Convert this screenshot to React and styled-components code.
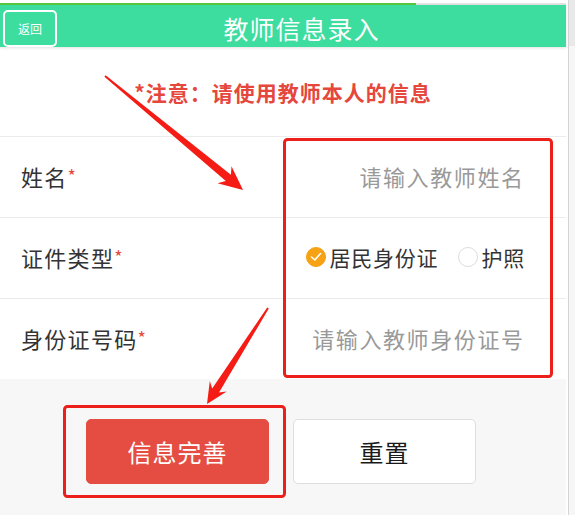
import React from "react";
import styled, { createGlobalStyle } from "styled-components";

const GlobalStyle = createGlobalStyle`
  html, body {
    margin: 0;
    padding: 0;
    background: #fff;
    overflow: hidden;
  }
  body {
    font-family: "Noto Sans CJK SC", "Noto Sans", sans-serif;
  }
`;

const Screen = styled.div`
  position: relative;
  display: flex;
  width: 575px;
  height: 515px;
  overflow: hidden;
`;

const Page = styled.div`
  width: 566px;
  flex-shrink: 0;
  display: flex;
  flex-direction: column;
  background: #fff;
`;

const LoadBar = styled.div`
  height: 2px;
  margin-top: 3px;
  background: linear-gradient(to right, #58c83f 0 416px, #e4e4e4 416px);
`;

const Header = styled.header`
  position: relative;
  z-index: 1;
  height: 42px;
  box-sizing: border-box;
  display: flex;
  align-items: center;
  padding: 4px 0 0 3px;
  background: #3ddc9f;
  box-shadow: 0 1px 3px rgba(0, 0, 0, 0.12);
`;

const BackButton = styled.button`
  width: 54px;
  height: 37px;
  box-sizing: border-box;
  padding: 0;
  border: 2px solid #fff;
  border-radius: 5px;
  background: transparent;
  color: #fff;
  font-family: inherit;
  font-size: 12px;
`;

const Title = styled.h1`
  flex: 1;
  margin: 0;
  padding-right: 20px;
  text-align: center;
  color: #fff;
  font-size: 25px;
  font-weight: 400;
  letter-spacing: 1px;
`;

const Notice = styled.div`
  height: 89px;
  display: flex;
  align-items: center;
  justify-content: center;
  color: #e5473c;
  font-size: 21px;
  font-weight: 700;
  letter-spacing: 1px;
`;

const Row = styled.div`
  height: 81px;
  box-sizing: border-box;
  display: flex;
  align-items: center;
  justify-content: space-between;
  padding: 0 41px 2px 21px;
  border-top: 1px solid #ececec;
`;

const Label = styled.span`
  color: #333;
  font-size: 22px;
  line-height: 1;
  letter-spacing: 1.3px;
  white-space: nowrap;
`;

const Star = styled.span`
  color: #e5473c;
  font-size: 18px;
  vertical-align: 3px;
`;

const Field = styled.input`
  flex: 1;
  min-width: 0;
  border: none;
  outline: none;
  background: transparent;
  text-align: right;
  font-family: inherit;
  font-size: 22px;
  letter-spacing: 1.6px;
  margin-right: -1.6px;
  color: #333;

  &::placeholder {
    color: #999;
  }
`;

const RadioGroup = styled.div`
  display: flex;
  align-items: center;
  gap: 20px;
`;

const RadioItem = styled.label`
  display: flex;
  align-items: center;
  gap: 3px;
  color: #333;
  font-size: 21px;
  letter-spacing: 0.8px;
`;

const RadioDot = styled.span`
  width: 20px;
  height: 20px;
  box-sizing: border-box;
  border-radius: 50%;
  display: flex;
  align-items: center;
  justify-content: center;
  background: ${(p) => (p.$checked ? "#f6a214" : "#fff")};
  border: 1px solid ${(p) => (p.$checked ? "#f6a214" : "#dcdcdc")};
`;

const Footer = styled.div`
  flex: 1;
  display: flex;
  justify-content: center;
  gap: 24px;
  padding: 40px 4px 0 0;
  background: #f7f7f7;
`;

const ActionButton = styled.button`
  width: 183px;
  height: 65px;
  box-sizing: border-box;
  border-radius: 5px;
  font-family: inherit;
  font-size: 24px;
  letter-spacing: 1px;
  border: 1px solid ${(p) => (p.$primary ? "#e54d43" : "#dedede")};
  background: ${(p) => (p.$primary ? "#e54d43" : "#fff")};
  color: ${(p) => (p.$primary ? "#fff" : "#1a1a1a")};
`;

const SideStrip = styled.div`
  flex: 1;
  margin-left: 2px;
  border-left: 1px solid #d4d4d4;
  background: linear-gradient(to bottom, #e9e9e9 0 46px, #f6f6f6 46px);
`;

const Overlay = styled.svg`
  position: absolute;
  left: 0;
  top: 0;
  pointer-events: none;
`;

function arrowPoints(x1, y1, x2, y2, tail, neck, headLen, headHalf) {
  const len = Math.hypot(x2 - x1, y2 - y1);
  const ux = (x2 - x1) / len;
  const uy = (y2 - y1) / len;
  const nx = -uy;
  const ny = ux;
  const bx = x2 - ux * headLen;
  const by = y2 - uy * headLen;
  const pts = [
    [x1 + nx * tail, y1 + ny * tail],
    [bx + nx * neck + ux * 5, by + ny * neck + uy * 5],
    [bx + nx * headHalf, by + ny * headHalf],
    [x2, y2],
    [bx - nx * headHalf, by - ny * headHalf],
    [bx - nx * neck + ux * 5, by - ny * neck + uy * 5],
    [x1 - nx * tail, y1 - ny * tail],
  ];
  return pts.map((p) => p.map((v) => v.toFixed(1)).join(",")).join(" ");
}

function Annotations() {
  return (
    <Overlay width="575" height="515" viewBox="0 0 575 515">
      <g fill="none" stroke="#ec1f1a" strokeWidth="3">
        <rect x="284.5" y="139.5" width="267" height="237" rx="3" />
        <rect x="64.5" y="406.5" width="220" height="90" rx="3" />
      </g>
      <g fill="#f51c16">
        <polygon points={arrowPoints(105, 76, 243, 190, 1, 4, 24, 11)} />
        <polygon points={arrowPoints(268, 308, 207, 404, 1, 4, 21, 10)} />
      </g>
    </Overlay>
  );
}

export default function App() {
  return (
    <Screen>
      <GlobalStyle />
      <Page>
        <LoadBar />
        <Header>
          <BackButton>返回</BackButton>
          <Title>教师信息录入</Title>
        </Header>
        <Notice>*注意：请使用教师本人的信息</Notice>
        <Row>
          <Label>
            姓名<Star>*</Star>
          </Label>
          <Field placeholder="请输入教师姓名" />
        </Row>
        <Row>
          <Label>
            证件类型<Star>*</Star>
          </Label>
          <RadioGroup>
            <RadioItem>
              <RadioDot $checked>
                <svg width="12" height="10" viewBox="0 0 12 10">
                  <polyline points="1.5,5 4.8,8 10.5,1.5" fill="none" stroke="#fff" strokeWidth="1.6" strokeLinecap="round" strokeLinejoin="round" />
                </svg>
              </RadioDot>
              居民身份证
            </RadioItem>
            <RadioItem>
              <RadioDot />
              护照
            </RadioItem>
          </RadioGroup>
        </Row>
        <Row>
          <Label>
            身份证号码<Star>*</Star>
          </Label>
          <Field placeholder="请输入教师身份证号" />
        </Row>
        <Footer>
          <ActionButton $primary>信息完善</ActionButton>
          <ActionButton>重置</ActionButton>
        </Footer>
      </Page>
      <SideStrip />
      <Annotations />
    </Screen>
  );
}
